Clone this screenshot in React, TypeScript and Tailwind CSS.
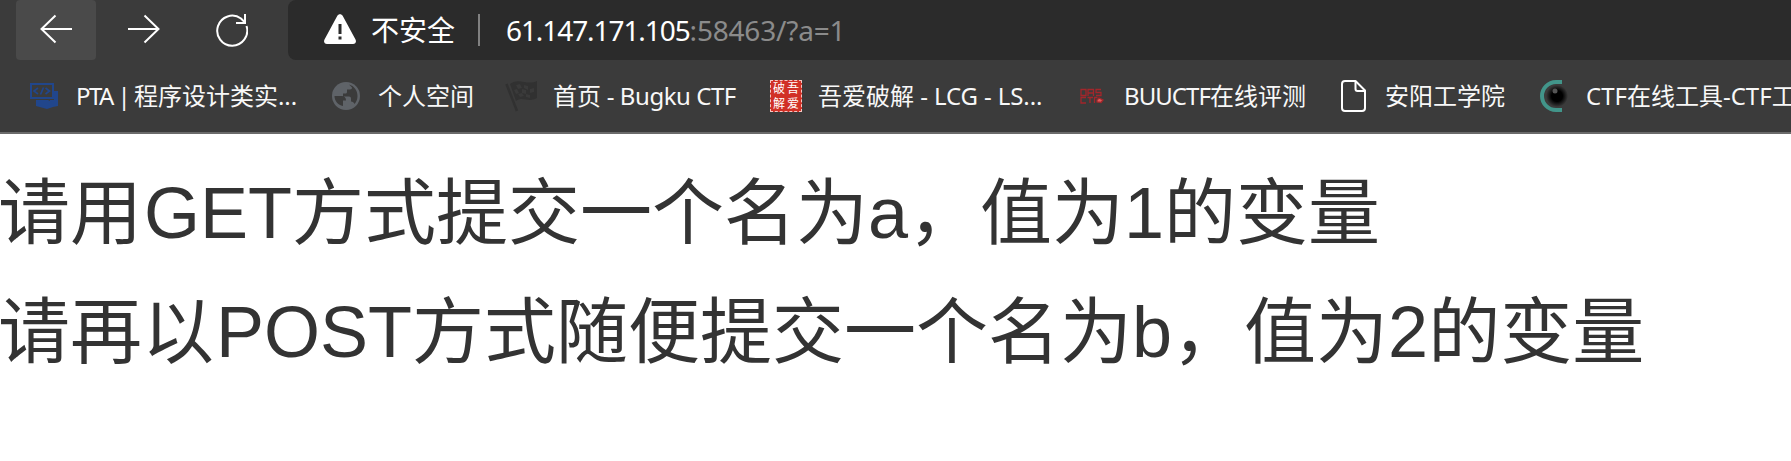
import React from "react";

const ui = "font-['Noto_Sans','Noto_Sans_CJK_SC',sans-serif]";

function Latin({ children, className = "" }: { children: React.ReactNode; className?: string }) {
  return <span className={"whitespace-pre " + className}>{children}</span>;
}

function Bookmark({ icon, width, children }: { icon: React.ReactNode; width: string; children: React.ReactNode }) {
  return (
    <div className={"flex h-8 shrink-0 items-center " + width}>
      <span className="mr-4 flex h-8 w-8 shrink-0 items-center justify-center">{icon}</span>
      <span className="whitespace-nowrap text-[24px] leading-8 text-[#f8f8f8]">{children}</span>
    </div>
  );
}

function PtaIcon() {
  return (
    <svg width="32" height="32" viewBox="0 0 32 32" fill="none">
      <path d="M26 11h4v15l-5 1-6 2-11-3v-6h18z" fill="#21468b" />
      <rect x="3" y="4" width="22" height="14" fill="#3b3b3b" stroke="#21468b" strokeWidth="2" />
      <path d="M10 8l-4 3 4 3M17.500 8l4 3-4 3M15.500 7.500l-3 7" stroke="#21468b" strokeWidth="1.700" />
      <path d="M18 19l4 2v-2z" fill="#3b3b3b" />
    </svg>
  );
}

function GlobeIcon() {
  return (
    <svg width="32" height="32" viewBox="0 0 32 32">
      <circle cx="16" cy="16" r="14" fill="#5f6368" />
      <path d="M4.500 16h7c3 0 4.500 1.500 4.500 4.500h-3v5.500c-5-1-8.500-5-8.500-10zM19 4.600c5 1.400 8.500 6 8.500 11.400 0 3.200-1 5.700-3 8-.600-1.600-1.600-2.500-3.500-2.500v-3c0-1.200-.800-2-2-2h-6v-3h2.500c1 0 1.500-.600 1.500-1.500V9.500h3c1.500 0 2-1 2-2z" fill="#3b3b3b" />
    </svg>
  );
}

function FlagIcon() {
  return (
    <svg width="32" height="32" viewBox="0 0 32 32" fill="none">
      <path d="M1.500 4l10.500 27" stroke="#313131" strokeWidth="2.500" />
      <path d="M5 4c9-7 17 2 27-3v17c-9 5-14-2-21 3z" fill="#313131" />
      <path d="M11 5l4-1 2 4-4 1zM19 5l4 1v4l-4-2zM25 9l4-1v4l-4 1zM9 10l3-1 2 4-3 1zM17 9l4 1v4l-4-1zM13 14l4-1 2 3-4 1zM21 14l4 1v3l-4-1z" fill="#3a3a3a" />
    </svg>
  );
}

function SealIcon() {
  return (
    <span className="grid h-8 w-8 grid-cols-2 grid-rows-2 border border-dashed border-[#f6c7c2] bg-[#d13026] px-px text-center text-[12px] leading-[15px] text-white">
      <span>破</span><span>吾</span><span>解</span><span>爱</span>
    </span>
  );
}

function DasIcon() {
  return (
    <svg width="32" height="32" viewBox="0 0 32 32" fill="none" stroke="#a3262b" strokeWidth="1.300">
      <path d="M5 9.500h5v6H5zM12 16V9.500h5.500V16M12 13h5.500M25 9.500h-5V12.500h5v3h-5M10 17.500H5v5.500h5M11.500 17.500H17M14 17.500V23M18.500 23v-5.500h3" />
      <path d="M21 20l2-2 4 2-2 2.500-4-.5z" fill="#e05a5a" />
    </svg>
  );
}

function PageIcon() {
  return (
    <svg width="32" height="32" viewBox="0 0 32 32" fill="none" stroke="#fff" strokeWidth="2" strokeLinejoin="round">
      <path d="M8 1h9.500L27 10.500V28a3 3 0 0 1-3 3H7a3 3 0 0 1-3-3V4a3 3 0 0 1 3-3z" />
      <path d="M17.500 1v8a2 2 0 0 0 2 2H27" />
    </svg>
  );
}

function EyeIcon() {
  return (
    <svg width="32" height="32" viewBox="0 0 32 32" fill="none">
      <defs>
        <radialGradient id="iris">
          <stop offset="0.500" stopColor="#000" />
          <stop offset="1" stopColor="#3b3b3b" />
        </radialGradient>
      </defs>
      <path d="M24 2h-6a14 14 0 0 0 0 28h6" stroke="#42958a" strokeWidth="4" />
      <circle cx="19" cy="16" r="11" fill="url(#iris)" />
      <circle cx="17" cy="11" r="2.500" fill="#555" />
    </svg>
  );
}

export default function App() {
  return (
    <div className={"h-[461px] w-full overflow-hidden bg-white " + ui}>
      <div className="flex h-[134px] flex-col border-b-2 border-[#6b6b6b] bg-[#3b3b3b]">
        <div className="flex h-[60px] pl-4">
          <div className="flex h-[60px] w-20 justify-center rounded-[4px] bg-[#4a4a4a]">
            <svg width="32" height="60" fill="none" stroke="#fff" strokeWidth="2">
              <path d="M32 29H1M15.500 15.500L1.500 29l14 13.500" />
            </svg>
          </div>
          <div className="ml-2 flex h-[60px] w-20 justify-center">
            <svg width="32" height="60" fill="none" stroke="#fff" strokeWidth="2">
              <path d="M0 29h31M16.500 15.500l14 13.500-14 13.500" />
            </svg>
          </div>
          <div className="ml-2 flex h-[60px] w-20 justify-center">
            <svg width="32" height="60" fill="none" stroke="#fff" strokeWidth="2">
              <path d="M30.500 26A15 15 0 1 1 25 18.500L29 22.500M29 14v9H20" />
            </svg>
          </div>
          <div className="ml-4 flex h-[60px] flex-1 items-center rounded-l-[8px] bg-[#2b2b2b] pl-9">
            <svg width="32" height="60" className="shrink-0">
              <path d="M13.200 16c1.200-2.400 4.400-2.400 5.600 0l12.700 23.500c1.200 2.200 0 4.500-2.500 4.500H3c-2.500 0-3.700-2.300-2.500-4.500z" fill="#fff" />
              <path d="M16 24v10M16 36.500v3" stroke="#2b2b2b" strokeWidth="3" />
            </svg>
            <span className="ml-[15px] w-[91px] shrink-0 whitespace-nowrap text-[28px] leading-[60px] text-white">不安全</span>
            <span className="ml-4 h-8 w-0.5 bg-[#818181]" />
            <span className="ml-[26px] whitespace-nowrap text-[28px] leading-[60px] text-white">
              <Latin className="tracking-[-1.080px]">61.147.171.105</Latin>
              <Latin className="text-[#8b8b8b] tracking-[-0.200px]">:58463/?a=1</Latin>
            </span>
          </div>
        </div>
        <div className="flex h-[72px] items-center pl-7">
          <Bookmark icon={<PtaIcon />} width="w-[302px]"><Latin className="tracking-[-1.550px]">PTA | </Latin>程序设计类实<Latin>...</Latin></Bookmark>
          <Bookmark icon={<GlobeIcon />} width="w-[175px]">个人空间</Bookmark>
          <Bookmark icon={<FlagIcon />} width="w-[265px]">首页<Latin className="tracking-[-0.450px]"> - Bugku CTF</Latin></Bookmark>
          <Bookmark icon={<SealIcon />} width="w-[306px]">吾爱破解<Latin className="tracking-[-0.100px]"> - LCG - LS...</Latin></Bookmark>
          <Bookmark icon={<DasIcon />} width="w-[262px]"><Latin className="tracking-[-0.950px]">BUUCTF</Latin>在线评测</Bookmark>
          <Bookmark icon={<PageIcon />} width="w-[200px]"><span className="-ml-px">安阳工学院</span></Bookmark>
          <Bookmark icon={<EyeIcon />} width="w-[300px]"><Latin>CTF</Latin>在线工具<Latin>-CTF</Latin>工具</Bookmark>
        </div>
      </div>
      <div className="pt-[20px] font-['Liberation_Sans','Noto_Sans_CJK_SC',sans-serif] text-[72px] leading-[119px] text-[#333]">
        <h1 className="-ml-0.5 h-[119px] whitespace-nowrap">请用<span className="ml-0.5">GET</span>方式提交一个名为a，值为1的变量</h1>
        <h1 className="-ml-0.5 h-[119px] whitespace-nowrap">请再以<span className="ml-0.5">POST</span>方式随便提交一个名为b，值为2的变量</h1>
      </div>
    </div>
  );
}
